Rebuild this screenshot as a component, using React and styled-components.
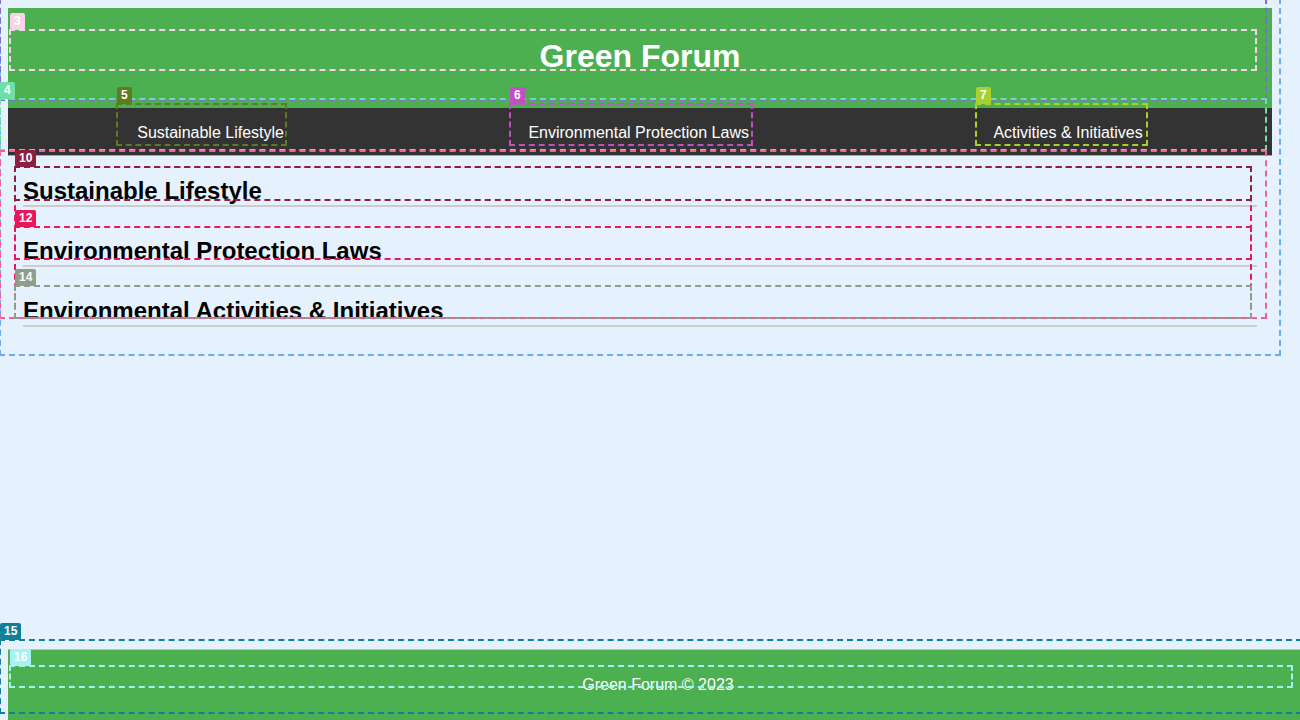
import React from 'react';
import styled, { createGlobalStyle } from 'styled-components';

const GlobalStyle = createGlobalStyle`
  body {
    margin: 8px;
    background: #e6f1fe;
    font-family: "Liberation Sans", Arial, sans-serif;
  }
`;

const Page = styled.div`
  max-width: 1264px;
`;

const Header = styled.header`
  background: #4caf50;
  padding: 30px 0 33px;
`;

const Title = styled.h1`
  margin: 0;
  color: #fff;
  font-size: 32px;
  line-height: 37px;
  font-weight: bold;
  text-align: center;
`;

const Nav = styled.nav`
  display: flex;
  justify-content: space-around;
  background: #333;
  padding: 16px 7px 13px;
  border-bottom: 1px solid #a3a7ad;
`;

const NavLink = styled.a`
  color: #fff;
  font-size: 16px;
  line-height: 18px;
  text-decoration: none;
`;

const Main = styled.main`
  display: flex;
  flex-direction: column;
  gap: 30px;
  padding: 21px 15px 0;
`;

const SectionTitle = styled.h2`
  margin: 0;
  font-size: 24px;
  font-weight: bold;
  color: #000;
  border-bottom: 2px solid #ccc;
`;

const Footer = styled.footer`
  position: fixed;
  bottom: 0;
  left: 8px;
  width: 100%;
  background: #4caf50;
  border-top: 1px solid #a9cfaa;
  padding: 10px 0;
  text-align: center;
`;

const FooterText = styled.p`
  margin: 16px 0;
  color: #fff;
  font-size: 16px;
  line-height: 18px;
`;

/* inspection overlay drawn over the page */
const Overlay = styled.div`
  position: absolute;
  top: 0;
  left: 0;
  width: 1300px;
  height: 720px;
  overflow: hidden;
  pointer-events: none;
`;

const Mark = styled.div`
  position: absolute;
  box-sizing: border-box;
  border: 2px dashed ${(p) => p.$color};
`;

const Tag = styled.span`
  position: absolute;
  left: -1px;
  top: -18px;
  height: 17px;
  padding: 0 4px;
  border-radius: 2px;
  background: ${(p) => p.$color};
  color: #fff;
  font: bold 12px/17px "Liberation Sans", Arial, sans-serif;
`;

const marks = [
  { c: '#6aaef0', x: -1, y: -2, w: 1282, h: 358 },
  { c: '#7b6fd6', x: -1, y: -2, w: 1268, h: 103 },
  { n: '3', c: '#f6d3e8', x: 9, y: 29, w: 1248, h: 42 },
  { n: '4', c: '#6ee0a6', x: -1, y: 98, w: 1268, h: 53 },
  { n: '5', c: '#5e7b22', x: 116, y: 103, w: 171, h: 43 },
  { n: '6', c: '#c24fc4', x: 509, y: 103, w: 244, h: 43 },
  { n: '7', c: '#a8d12c', x: 975, y: 103, w: 173, h: 43 },
  { c: '#f0609c', x: -1, y: 150, w: 1268, h: 169 },
  { c: '#e8185d', x: 14, y: 166, w: 1238, h: 153 },
  { n: '10', c: '#8b1f3f', x: 14, y: 166, w: 1238, h: 35 },
  { n: '12', c: '#e8185d', x: 14, y: 226, w: 1238, h: 34 },
  { n: '14', c: '#8f9d8b', x: 14, y: 285, w: 1238, h: 34 },
  { n: '15', c: '#107f98', x: -1, y: 639, w: 1303, h: 75 },
  { n: '16', c: '#a6f2f0', x: 9, y: 665, w: 1284, h: 23 },
];

const sections = [
  'Sustainable Lifestyle',
  'Environmental Protection Laws',
  'Environmental Activities & Initiatives',
];

export default function App() {
  return (
    <>
      <GlobalStyle />
      <Page>
        <Header>
          <Title>Green Forum</Title>
        </Header>
        <Nav>
          <NavLink href="#lifestyle">Sustainable Lifestyle</NavLink>
          <NavLink href="#laws">Environmental Protection Laws</NavLink>
          <NavLink href="#activities">Activities &amp; Initiatives</NavLink>
        </Nav>
        <Main>
          {sections.map((s) => (
            <section key={s}>
              <SectionTitle>{s}</SectionTitle>
            </section>
          ))}
        </Main>
      </Page>
      <Footer>
        <FooterText>Green Forum © 2023</FooterText>
      </Footer>
      <Overlay>
        {marks.map((m, i) => (
          <Mark
            key={i}
            $color={m.c}
            style={{ left: m.x, top: m.y, width: m.w, height: m.h }}
          >
            {m.n && <Tag $color={m.c}>{m.n}</Tag>}
          </Mark>
        ))}
      </Overlay>
    </>
  );
}
